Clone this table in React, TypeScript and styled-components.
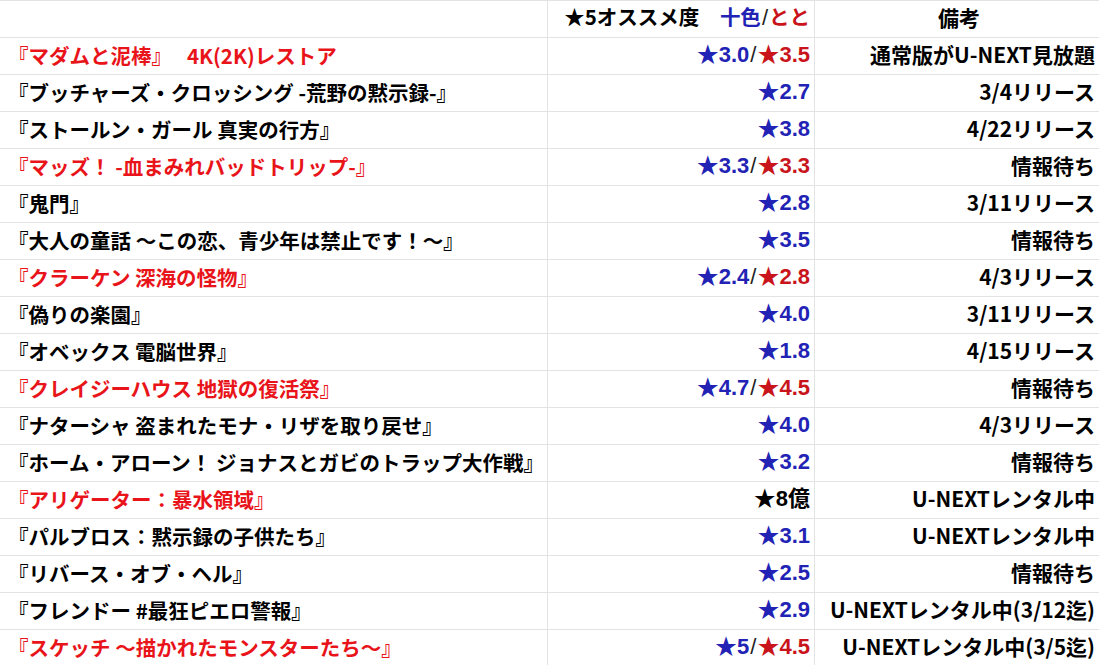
import styled, { createGlobalStyle } from "styled-components";

const GlobalStyle = createGlobalStyle`
  html, body {
    margin: 0;
    padding: 0;
    background: #fff;
  }
  body {
    font-family: "Noto Sans CJK JP", "Noto Sans", sans-serif;
  }
`;

type Tone = "black" | "red";

interface Movie {
  title: string;
  tone: Tone;
  blue?: string;
  red?: string;
  black?: string;
  note: string;
}

const movies: Movie[] = [
  { title: "『マダムと泥棒』　 4K(2K)レストア", tone: "red", blue: "3.0", red: "3.5", note: "通常版がU-NEXT見放題" },
  { title: "『ブッチャーズ・クロッシング -荒野の黙示録-』", tone: "black", blue: "2.7", note: "3/4リリース" },
  { title: "『ストールン・ガール 真実の行方』", tone: "black", blue: "3.8", note: "4/22リリース" },
  { title: "『マッズ！ -血まみれバッドトリップ-』", tone: "red", blue: "3.3", red: "3.3", note: "情報待ち" },
  { title: "『鬼門』", tone: "black", blue: "2.8", note: "3/11リリース" },
  { title: "『大人の童話 ～この恋、青少年は禁止です！～』", tone: "black", blue: "3.5", note: "情報待ち" },
  { title: "『クラーケン 深海の怪物』", tone: "red", blue: "2.4", red: "2.8", note: "4/3リリース" },
  { title: "『偽りの楽園』", tone: "black", blue: "4.0", note: "3/11リリース" },
  { title: "『オベックス 電脳世界』", tone: "black", blue: "1.8", note: "4/15リリース" },
  { title: "『クレイジーハウス 地獄の復活祭』", tone: "red", blue: "4.7", red: "4.5", note: "情報待ち" },
  { title: "『ナターシャ 盗まれたモナ・リザを取り戻せ』", tone: "black", blue: "4.0", note: "4/3リリース" },
  { title: "『ホーム・アローン！ ジョナスとガビのトラップ大作戦』", tone: "black", blue: "3.2", note: "情報待ち" },
  { title: "『アリゲーター：暴水領域』", tone: "red", black: "8億", note: "U-NEXTレンタル中" },
  { title: "『パルブロス：黙示録の子供たち』", tone: "black", blue: "3.1", note: "U-NEXTレンタル中" },
  { title: "『リバース・オブ・ヘル』", tone: "black", blue: "2.5", note: "情報待ち" },
  { title: "『フレンドー #最狂ピエロ警報』", tone: "black", blue: "2.9", note: "U-NEXTレンタル中(3/12迄)" },
  { title: "『スケッチ ～描かれたモンスターたち～』", tone: "red", blue: "5", red: "4.5", note: "U-NEXTレンタル中(3/5迄)" },
];

const Sheet = styled.div`
  display: grid;
  grid-template-columns: 548px 267px 284px;
  grid-auto-rows: 37px;
  width: 1099px;
  border-top: 1px solid #e2e3e3;
  font-weight: 700;
  color: #000;
`;

const Cell = styled.div<{ $align?: "left" | "right" | "center"; $tone?: Tone; $last?: boolean; $size?: number }>`
  display: flex;
  align-items: center;
  justify-content: ${(p) =>
    p.$align === "right" ? "flex-end" : p.$align === "center" ? "center" : "flex-start"};
  padding: 0 4px 2px 8px;
  font-size: ${(p) => p.$size ?? 21}px;
  border-bottom: 1px solid #e2e3e3;
  border-right: ${(p) => (p.$last ? "none" : "1px solid #e2e3e3")};
  color: ${(p) => (p.$tone === "red" ? "#e8141a" : "#000")};
  white-space: nowrap;
  overflow: hidden;
  box-sizing: border-box;
`;

const Line = styled.span`
  display: inline-block;
  line-height: 1.2;
`;

const Score = styled.span<{ $color: "blue" | "red" | "black" }>`
  font-family: "Liberation Sans", "Noto Sans CJK JP", sans-serif;
  font-size: 22px;
  color: ${(p) => (p.$color === "blue" ? "#2222b4" : p.$color === "red" ? "#c8141a" : "#000")};
`;

const Slash = styled.span`
  font-family: "Liberation Sans", sans-serif;
  font-weight: 400;
  font-size: 22px;
  color: #222;
  margin: 0 1px;
`;

const HeadNote = styled.span<{ $color: "blue" | "red" }>`
  color: ${(p) => (p.$color === "blue" ? "#2222b4" : "#c8141a")};
`;

function Rating({ movie }: { movie: Movie }) {
  if (movie.black)
    return (
      <Line>
        <Score $color="black">★{movie.black}</Score>
      </Line>
    );
  return (
    <Line>
      <Score $color="blue">★{movie.blue}</Score>
      {movie.red && (
        <>
          <Slash>/</Slash>
          <Score $color="red">★{movie.red}</Score>
        </>
      )}
    </Line>
  );
}

export default function App() {
  return (
    <>
      <GlobalStyle />
      <Sheet>
        <Cell />
        <Cell $align="right" $size={20.5}>
          <Line>
            ★5オススメ度　<HeadNote $color="blue">十色</HeadNote>
            <Slash>/</Slash>
            <HeadNote $color="red">とと</HeadNote>
          </Line>
        </Cell>
        <Cell $align="center" $last>
          <Line>備考</Line>
        </Cell>
        {movies.map((m) => (
          <>
            <Cell key={m.title} $tone={m.tone} $size={20.5}>
              <Line>{m.title}</Line>
            </Cell>
            <Cell $align="right">
              <Rating movie={m} />
            </Cell>
            <Cell $align="right" $last>
              <Line>{m.note}</Line>
            </Cell>
          </>
        ))}
      </Sheet>
    </>
  );
}
